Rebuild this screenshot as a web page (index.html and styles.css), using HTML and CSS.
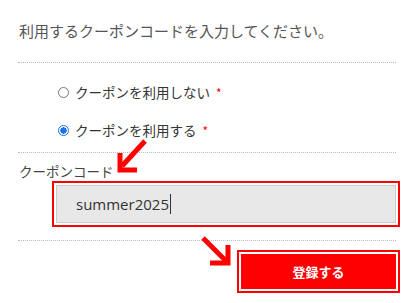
FILE: index.html
```html
<!DOCTYPE html>
<html lang="ja">
<head>
<meta charset="utf-8">
<title>クーポン</title>
<link rel="stylesheet" href="styles.css">
</head>
<body>
<div class="form">
  <p class="lead">利用するクーポンコードを入力してください。</p>
  <div class="sep"></div>
  <div class="radios">
    <label class="radio"><span class="dot"></span><span class="txt">クーポンを利用しない</span><span class="req">*</span></label>
    <label class="radio checked"><span class="dot"></span><span class="txt">クーポンを利用する</span><span class="req">*</span></label>
  </div>
  <div class="sep sep2"></div>
  <div class="field-label">クーポンコード</div>
  <div class="input-wrap">
    <div class="input"><span class="val">summer2025</span><span class="caret"></span></div>
  </div>
  <div class="sep sep3"></div>
  <div class="actions">
    <div class="btn-wrap"><div class="btn">登録する</div></div>
  </div>
</div>
<svg class="arrows" width="415" height="303" viewBox="0 0 415 303">
  <g fill="none" stroke="#f00" stroke-width="5" stroke-linecap="butt" stroke-linejoin="miter">
    <path d="M145 141 L122 166"/>
    <path d="M120 153 L120 170 L137 170"/>
    <path d="M203 238 L226 261"/>
    <path d="M210 263 L228 263 L228 245"/>
  </g>
</svg>
</body>
</html>
```

FILE: styles.css
```css
html, body {
  margin: 0;
  padding: 0;
  background: #fff;
}
body {
  width: 415px;
  height: 303px;
  position: relative;
  overflow: hidden;
  font-family: "Noto Sans CJK JP", "Noto Sans", sans-serif;
}
.form {
  padding: 20px 15px 0 18px;
}
.lead {
  margin: 0 0 0 1px;
  font-size: 15px;
  line-height: 22px;
  color: #555;
}
.sep {
  margin: 20px 4px 0 0;
  border-top: 1px dotted #bbb;
}
.radios {
  display: flex;
  flex-direction: column;
  gap: 16px;
  padding: 18px 0 0 40px;
}
.radio {
  display: flex;
  align-items: center;
  height: 22px;
  font-size: 13.5px;
  color: #333;
}
.dot {
  width: 11px;
  height: 11px;
  box-sizing: border-box;
  border: 1px solid #777;
  border-radius: 50%;
  margin-right: 6px;
  flex: none;
}
.radio.checked .dot {
  border: 1.5px solid #1a73e8;
  background: radial-gradient(circle, #1a73e8 0 3px, #fff 3.3px);
}
.req {
  color: #f00;
  font-size: 12px;
  margin-left: 6px;
  position: relative;
  top: 0;
}
.sep2 {
  margin-top: 11px;
}
.field-label {
  margin: 8px 0 0 1px;
  font-size: 13.5px;
  line-height: 20px;
  color: #444;
}
.input-wrap {
  margin-left: 34px;
  border: 2px solid #f00;
  padding: 2px;
  background: #fff;
}
.input {
  height: 36px;
  border: 1px solid #ccc;
  background: #e8e8e8;
  display: flex;
  align-items: center;
  padding-left: 19px;
  font-family: "Open Sans", "Noto Sans", sans-serif;
  font-size: 15px;
  color: #333;
}
.caret {
  width: 1px;
  height: 20px;
  background: #333;
  margin-left: 1px;
}
.sep3 {
  margin-top: 13px;
}
.actions {
  display: flex;
  justify-content: flex-end;
  margin-top: 9px;
}
.btn-wrap {
  border: 2px solid #f00;
  padding: 2px;
  background: #fff;
}
.btn {
  width: 155px;
  height: 35px;
  background: #f00;
  color: #fff;
  font-size: 13px;
  font-weight: 700;
  display: flex;
  align-items: center;
  justify-content: center;
}
.arrows {
  position: absolute;
  left: 0;
  top: 0;
  pointer-events: none;
}
```
